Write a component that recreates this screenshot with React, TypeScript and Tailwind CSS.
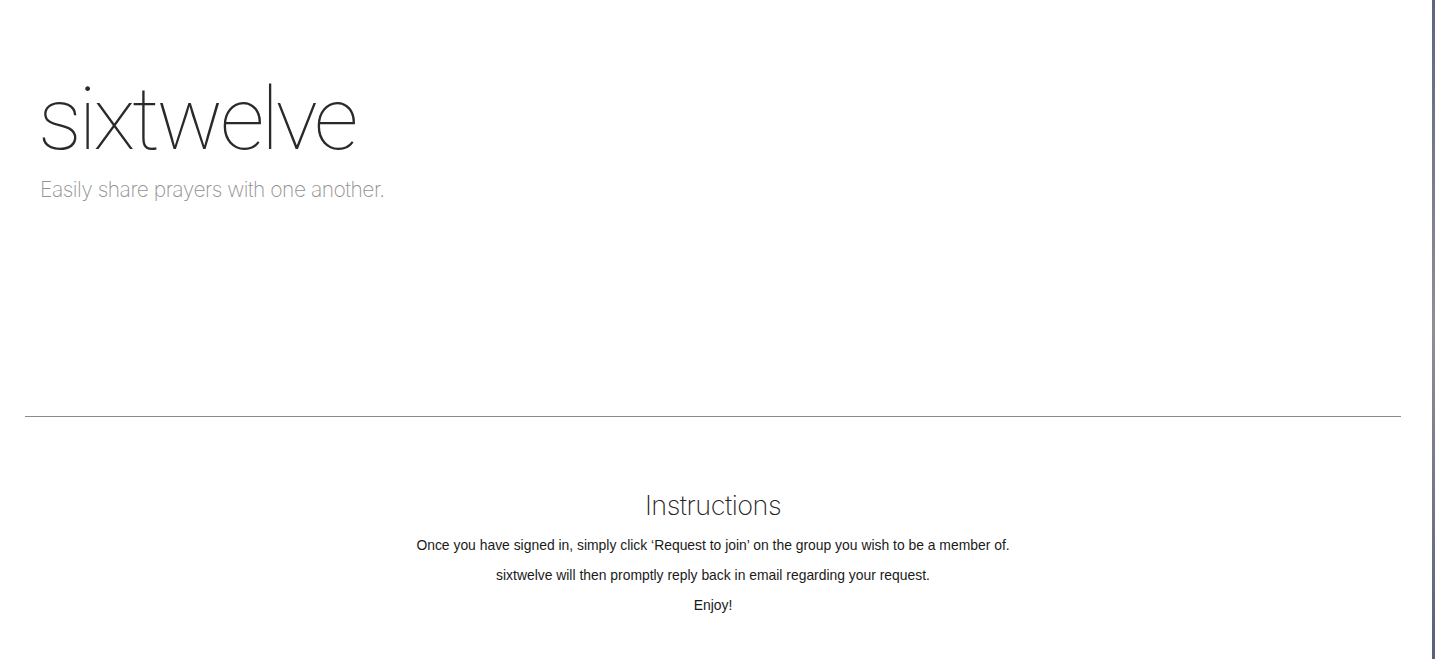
import React from "react";

export default function App() {
  return (
    <div className="flex h-[659px] w-full overflow-hidden bg-white">
      <div className="flex-1 min-w-0">
        <header className="pl-[38px] pt-[75px] h-[416px]">
          <h1
            className="text-[88px] leading-[88px] font-thin text-[#2a2a2a] tracking-[-3.3px]"
            style={{ fontFamily: "Roboto, Inter, 'Liberation Sans', sans-serif" }}
          >
            sixtwelve
          </h1>
          <p
            className="ml-[2px] mt-[13px] text-[21px] leading-[28px] font-extralight text-[#929292] tracking-[-0.5px]"
            style={{ fontFamily: "Inter, 'Liberation Sans', sans-serif" }}
          >
            Easily share prayers with one another.
          </p>
        </header>
        <div className="ml-[25px] w-[1376px] border-t border-[#8a8a8a]" />
        <section className="w-[1376px] ml-[25px] pt-[71px] flex flex-col items-center">
          <h2
            className="text-[27px] leading-[36px] font-extralight text-[#2a2228] tracking-[-0.5px]"
            style={{ fontFamily: "Inter, 'Liberation Sans', sans-serif" }}
          >
            Instructions
          </h2>
          <div
            className="mt-[12px] flex flex-col items-center gap-[12px] text-[13.9px] leading-[18px] text-[#1a1a1a]"
            style={{ fontFamily: "'Liberation Sans', Arial, sans-serif" }}
          >
            <p>Once you have signed in, simply click ‘Request to join’ on the group you wish to be a member of.</p>
            <p>sixtwelve will then promptly reply back in email regarding your request.</p>
            <p>Enjoy!</p>
          </div>
        </section>
      </div>
      <div className="w-[3px] h-full bg-gradient-to-b from-[#5f6680] via-[#8f8f96] to-[#5a6078]" />
    </div>
  );
}
